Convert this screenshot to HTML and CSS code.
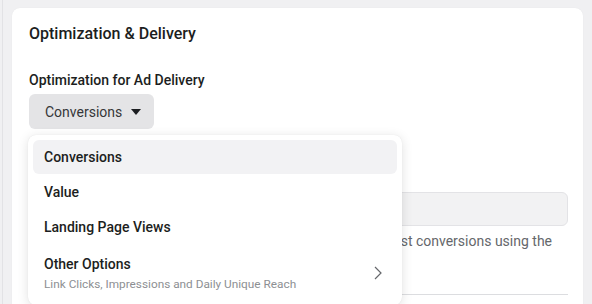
FILE: index.html
```html
<!DOCTYPE html>
<html lang="en">
<head>
	<meta charset="UTF-8">
	<title>Optimization &amp; Delivery</title>
	<link rel="stylesheet" href="styles.css">
</head>
<body>
	<div class="page">
		<!-- 卡片 -->
		<div class="card">
			<h2 class="title">Optimization &amp; Delivery</h2>
			<div class="label">Optimization for Ad Delivery</div>
			<div class="select">
				<span>Conversions</span>
				<svg class="caret" width="10" height="6" viewBox="0 0 10 6"><path d="M0 0h10L5 6z" fill="#1c1e21"/></svg>
			</div>
			<!-- 被遮住的内容 -->
			<div class="field-label">Conversion Event</div>
			<div class="field"></div>
			<p class="help">We'll deliver your ads to people likely to help you get the most conversions using the lowest cost bid strategy.</p>
			<div class="divider"></div>

			<!-- 下拉菜单 -->
			<ul class="menu">
				<li class="item active">Conversions</li>
				<li class="item">Value</li>
				<li class="item">Landing Page Views</li>
				<li class="item more">
					<div>
						<div>Other Options</div>
						<div class="sub">Link Clicks, Impressions and Daily Unique Reach</div>
					</div>
					<svg class="chevron" width="8" height="14" viewBox="0 0 8 14"><path d="M1 1l6 6-6 6" fill="none" stroke="#65676b" stroke-width="1.2"/></svg>
				</li>
			</ul>
		</div>
	</div>
</body>
</html>
```

FILE: styles.css
```css
*{
	margin: 0;
	padding: 0;
	box-sizing: border-box;
}
body{
	background: #f0f0f2;
	font-family: Roboto, "Liberation Sans", sans-serif;
	color: #1c1e21;
	overflow: hidden;
}
/*左边的细线*/
.page{
	border-left: 1px solid #e2e2e5;
	margin-left: 2px;
	padding: 8px 9px 0 9px;
	height: 304px;
}
.card{
	position: relative;
	background: #fff;
	border-radius: 8px;
	padding: 16px 15px 0 17px;
	height: 320px;
	box-shadow: 0 0 1px rgba(0,0,0,0.08);
}
.title{
	font-size: 16px;
	font-weight: 500;
	line-height: 20px;
}
.label{
	margin-top: 27px;
	font-size: 14px;
	font-weight: 500;
	line-height: 18px;
}
.select{
	display: inline-flex;
	align-items: center;
	gap: 9px;
	margin-top: 5px;
	height: 35px;
	padding: 0 13px 0 16px;
	background: #e4e4e6;
	border-radius: 6px;
	font-size: 14px;
	color: #353638;
}
.field-label{
	margin-top: 35px;
	font-size: 14px;
	font-weight: 500;
	line-height: 18px;
}
.field{
	margin-top: 10px;
	height: 34px;
	background: #f2f2f3;
	border: 1px solid #e3e3e6;
	border-radius: 6px;
}
.help{
	margin-top: 6px;
	padding-left: 4px;
	font-size: 14px;
	line-height: 18px;
	color: #65676b;
}
.divider{
	margin-top: 26px;
	height: 1px;
	background: #dcdde0;
}
/*下拉菜单*/
.menu{
	position: absolute;
	top: 127px;
	left: 16px;
	width: 374px;
	padding: 5px;
	list-style: none;
	background: #fff;
	border-radius: 8px;
	box-shadow: 0 2px 12px rgba(0,0,0,0.12), 0 0 1px rgba(0,0,0,0.1);
}
.item{
	display: flex;
	align-items: center;
	height: 34px;
	padding: 0 11px;
	border-radius: 6px;
	font-size: 14px;
	font-weight: 500;
	margin-bottom: 1px;
}
.active{
	background: #f2f2f4;
}
.more{
	height: 54px;
	justify-content: space-between;
	padding-right: 15px;
	padding-top: 2px;
}
.sub{
	margin-top: 5px;
	font-size: 11.8px;
	font-weight: 400;
	color: #8d8f93;
}
```
